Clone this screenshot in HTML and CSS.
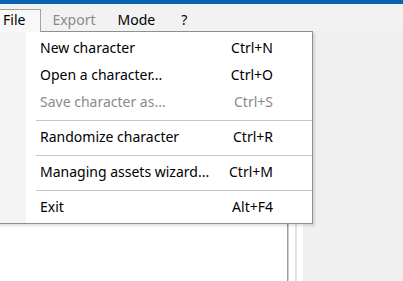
FILE: index.html
```html
<!DOCTYPE html>
<html>
<head>
<meta charset="utf-8">
<link rel="stylesheet" href="styles.css">
</head>
<body>
<div class="titlebar"></div>
<nav class="menubar">
  <span class="mi mi-open">File</span>
  <span class="mi mi-disabled">Export</span>
  <span class="mi mi-mode">Mode</span>
  <span class="mi mi-help">?</span>
</nav>
<div class="workspace">
  <div class="panel"></div>
  <div class="splitter"></div>
  <div class="strip"></div>
  <div class="strip-line"></div>
  <div class="strip"></div>
  <div class="side"></div>
</div>
<div class="popup">
  <div class="item"><span class="label">New character</span><span class="key">Ctrl+N</span></div>
  <div class="item"><span class="label">Open a character...</span><span class="key">Ctrl+O</span></div>
  <div class="item item-disabled"><span class="label">Save character as...</span><span class="key">Ctrl+S</span></div>
  <div class="sep"></div>
  <div class="item"><span class="label">Randomize character</span><span class="key">Ctrl+R</span></div>
  <div class="sep"></div>
  <div class="item"><span class="label">Managing assets wizard...</span><span class="key">Ctrl+M</span></div>
  <div class="sep"></div>
  <div class="item"><span class="label">Exit</span><span class="key">Alt+F4</span></div>
</div>
</body>
</html>
```
FILE: styles.css
```css
* { box-sizing: border-box; }
html, body {
  margin: 0;
  padding: 0;
  width: 403px;
  height: 281px;
  overflow: hidden;
}
body {
  position: relative;
  background: #f0f0f0;
  font-family: "Noto Sans", "Open Sans", sans-serif;
  font-size: 14px;
  color: #000;
}
.titlebar {
  height: 4px;
  background: #0a63b0;
}
.menubar {
  display: flex;
  align-items: flex-start;
  height: 27px;
  padding-top: 5px;
  margin-left: -8px;
  background: #f2f2f2;
}
.mi {
  height: 22px;
  padding: 1px 11px 0;
  line-height: 20px;
  white-space: nowrap;
}
.mi-open {
  position: relative;
  z-index: 2;
  height: 23px;
  padding: 0 15px 0 10px;
  border: 1px solid #a4a4a4;
  border-bottom: none;
  background: #f8f8f8;
}
.mi-disabled { color: #8a8a8a; }
.mi-mode { padding-right: 13px; }
.mi-help { padding-left: 13px; }
.workspace {
  display: flex;
  height: 250px;
}
.panel {
  width: 287px;
  background: #fff;
}
.splitter {
  width: 2px;
  border-left: 1px solid #9c9c9c;
  background: #cfcfcf;
}
.strip {
  width: 6px;
  background: #fff;
}
.strip-line {
  width: 2px;
  background: #e2e2e2;
}
.side {
  flex: 1;
  background: #f0f0f0;
}
.popup {
  position: absolute;
  z-index: 1;
  left: -8px;
  top: 31px;
  width: 321px;
  height: 193px;
  padding: 3px 0 2px;
  border: 1px solid #8f8f8f;
  background: linear-gradient(to right, #f4f4f4 0, #f4f4f4 33px, #fff 33px);
  box-shadow: 2px 2px 2px rgba(0, 0, 0, 0.12);
}
.item {
  display: flex;
  justify-content: space-between;
  height: 27px;
  padding: 0 39px 2px 47px;
  line-height: 25px;
  white-space: nowrap;
}
.item-disabled { color: #8a8a8a; }
.sep {
  height: 8px;
  padding-top: 4px;
  margin-left: 43px;
}
.sep::before {
  content: "";
  display: block;
  height: 1px;
  background: #c6c6c6;
}
```
